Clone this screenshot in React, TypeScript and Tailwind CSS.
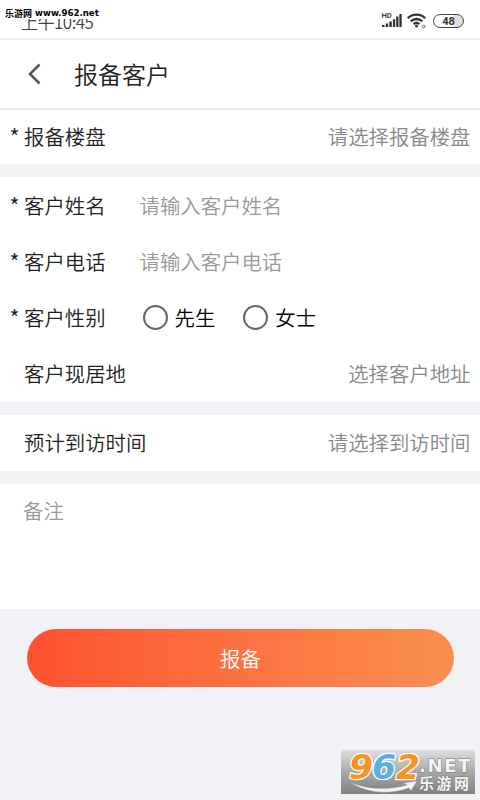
import { useState } from 'react';
import type { ReactNode } from 'react';

function StatusBar() {
  return (
    <div className="relative h-10 border-b-2 border-[#f0f0f0] bg-white overflow-hidden">
      <div className="flex h-full items-start justify-between pl-[21px] pr-[16px]">
        <span className="mt-[8px] whitespace-nowrap text-[17px] leading-[27px] tracking-[-0.5px] text-[#444]">上午10:45</span>
        <div className="mt-[12px] flex items-start">
          <svg width="22" height="17" viewBox="0 0 22 17" fill="#333">
            <text x="0.5" y="6" fontSize="7.5" fontWeight="600" fontFamily="Roboto, sans-serif">HD</text>
            <path d="M1 13h2.500v2H1zM4.700 11.500h2.500v3.500h-2.500zM8.300 9.500h2.500v5.500h-2.500zM11.900 7.200h2.300v7.800h-2.300zM15.200 4.500h2.300v10.500h-2.300zM18.400 2h2.300v13h-2.300z" />
          </svg>
          <svg className="ml-[4px]" width="21" height="18" viewBox="0 0 21 18" fill="none" stroke="#333" strokeWidth="2.300">
            <path d="M0.800 6.200C5.500 1.400 13.500 1.400 18.200 6.200M3.800 9.300C7 6.200 12 6.200 15.200 9.300M6.700 12.200C8.400 10.500 10.600 10.500 12.300 12.200" />
            <circle cx="9.500" cy="14" r="1.500" fill="#333" stroke="none" />
            <ellipse cx="16.700" cy="14.500" rx="1.500" ry="1.200" strokeWidth="1" stroke="#666" />
          </svg>
          <div className="ml-[5px] mt-[2px] flex h-[14px] w-[31px] items-center justify-center rounded-full border-[1.5px] border-[#444] bg-linear-to-r from-white from-70% to-[#ddd] to-70% font-[Roboto,sans-serif] text-[11px] font-bold leading-none text-[#333]">
            48
          </div>
        </div>
      </div>
      <div className="absolute left-0 top-0 flex h-[19px] w-[104px] items-center whitespace-nowrap bg-white pl-[5px] pt-[7px] text-black">
        <span className="text-[9px] font-bold leading-none">乐游网</span>
        <span className="ml-[3px] font-['DejaVu_Sans',sans-serif] text-[8.6px] font-bold leading-none">www.962.net</span>
      </div>
    </div>
  );
}

function Row({ label, required, children }: { label: string; required?: boolean; children?: ReactNode }) {
  return (
    <div className="flex h-14 items-center whitespace-nowrap bg-white pb-[1px] pr-[9.5px]">
      <div className="flex w-[139.5px] shrink-0 items-center">
        <span className="w-[24px] shrink-0 pl-[9.5px] text-[22px] leading-[30px] text-[#222]">{required ? '*' : ''}</span>
        <span className="text-[#222]">{label}</span>
      </div>
      {children}
    </div>
  );
}

function Radio({ label, checked, onClick }: { label: string; checked: boolean; onClick: () => void }) {
  return (
    <button type="button" onClick={onClick} className="flex items-center">
      <span className="flex size-[25px] items-center justify-center rounded-full border-[2.5px] border-[#666]">
        {checked && <span className="size-3 rounded-full bg-[#ff5430]" />}
      </span>
      <span className="ml-[7px] text-black">{label}</span>
    </button>
  );
}

function Watermark() {
  return (
    <svg className="absolute left-[341px] top-[750px]" width="134" height="44" viewBox="0 0 134 44">
      <defs>
        <linearGradient id="plate" x1="0" y1="0" x2="0" y2="1">
          <stop offset="0" stopColor="#dededf" />
          <stop offset="0.5" stopColor="#a9a9aa" />
          <stop offset="1" stopColor="#808080" />
        </linearGradient>
      </defs>
      <rect width="134" height="44" fill="url(#plate)" />
      <path d="M7 31C24 40 48 40 66 35L62 33L76 31L70 41L68 38C49 45 25 44 7 31Z" fill="#f4f4f4" stroke="#888" strokeWidth="0.500" />
      <g fontFamily="DejaVu Sans, sans-serif" fontWeight="bold" fontStyle="italic" fontSize="33" stroke="#fff" strokeWidth="2.500" paintOrder="stroke" strokeLinejoin="round">
        <text x="8" y="28.500" textLength="24" lengthAdjust="spacingAndGlyphs" fill="#f79422">9</text>
        <text x="31" y="28.500" textLength="24" lengthAdjust="spacingAndGlyphs" fill="#58afe0">6</text>
        <text x="55" y="28.500" textLength="24" lengthAdjust="spacingAndGlyphs" fill="#f79422">2</text>
      </g>
      <g fill="#f5f5f5" stroke="#777" strokeWidth="1" paintOrder="stroke" fontWeight="bold">
        <text x="78" y="22" fontSize="17.5" textLength="53" lengthAdjust="spacingAndGlyphs" letterSpacing="1.5" fontFamily="DejaVu Sans, sans-serif">.NET</text>
        <text x="78" y="39" fontSize="15" textLength="50" fontFamily="Noto Sans CJK SC, sans-serif">乐游网</text>
      </g>
    </svg>
  );
}

export default function App() {
  const [gender, setGender] = useState('');
  const [form, setForm] = useState({ name: '', phone: '', remark: '' });

  const handleChange = (e: { target: { name: string; value: string } }) => {
    const { name, value } = e.target;
    setForm({ ...form, [name]: value });
  };

  return (
    <div className="relative h-[800px] w-[480px] overflow-hidden bg-[#f2f1f6] font-['Noto_Sans_CJK_SC',sans-serif] text-[20.4px] font-[350]">
      <StatusBar />
      <header className="flex h-[70px] items-center border-b-2 border-[#e9e9e9] bg-white">
        <svg className="ml-[27px]" width="16" height="22" viewBox="0 0 16 22" fill="none" stroke="#555" strokeWidth="2.500">
          <path d="M12.500 1.500L3 11L12.500 20.500" />
        </svg>
        <h1 className="ml-[31px] text-[24px] text-[#222]">报备客户</h1>
      </header>

      <div className="h-[67px] overflow-hidden border-b-[13px] border-[#f2f2f2]">
        <div className="-mt-px">
          <Row label="报备楼盘" required>
            <span className="ml-auto text-[#888]">请选择报备楼盘</span>
          </Row>
        </div>
      </div>

      <section className="bg-white">
        <div className="pt-[1px]">
          <Row label="客户姓名" required>
            <input name="name" value={form.name} onChange={handleChange} placeholder="请输入客户姓名" className="min-w-0 flex-1 outline-none placeholder:text-[#999]" />
          </Row>
        </div>
        <Row label="客户电话" required>
          <input name="phone" value={form.phone} onChange={handleChange} placeholder="请输入客户电话" className="min-w-0 flex-1 outline-none placeholder:text-[#999]" />
        </Row>
        <Row label="客户性别" required>
          <div className="flex gap-[28px] pl-[3px]">
            <Radio label="先生" checked={gender === 'male'} onClick={() => setGender('male')} />
            <Radio label="女士" checked={gender === 'female'} onClick={() => setGender('female')} />
          </div>
        </Row>
        <Row label="客户现居地">
          <span className="ml-auto text-[#888]">选择客户地址</span>
        </Row>
      </section>

      <section className="mt-[13px]">
        <Row label="预计到访时间">
          <span className="ml-auto text-[#888]">请选择到访时间</span>
        </Row>
      </section>

      <textarea name="remark" value={form.remark} onChange={handleChange} placeholder="备注" className="mt-[13px] block h-[125px] w-full resize-none bg-white px-[23px] pt-[11px] outline-none placeholder:text-[#999]" />

      <button type="button" className="ml-[27px] mt-[20px] flex h-[58px] w-[427px] items-center justify-center rounded-full bg-linear-to-r from-[#ff5030] to-[#f98e50] text-white">
        报备
      </button>
      <Watermark />
    </div>
  );
}
